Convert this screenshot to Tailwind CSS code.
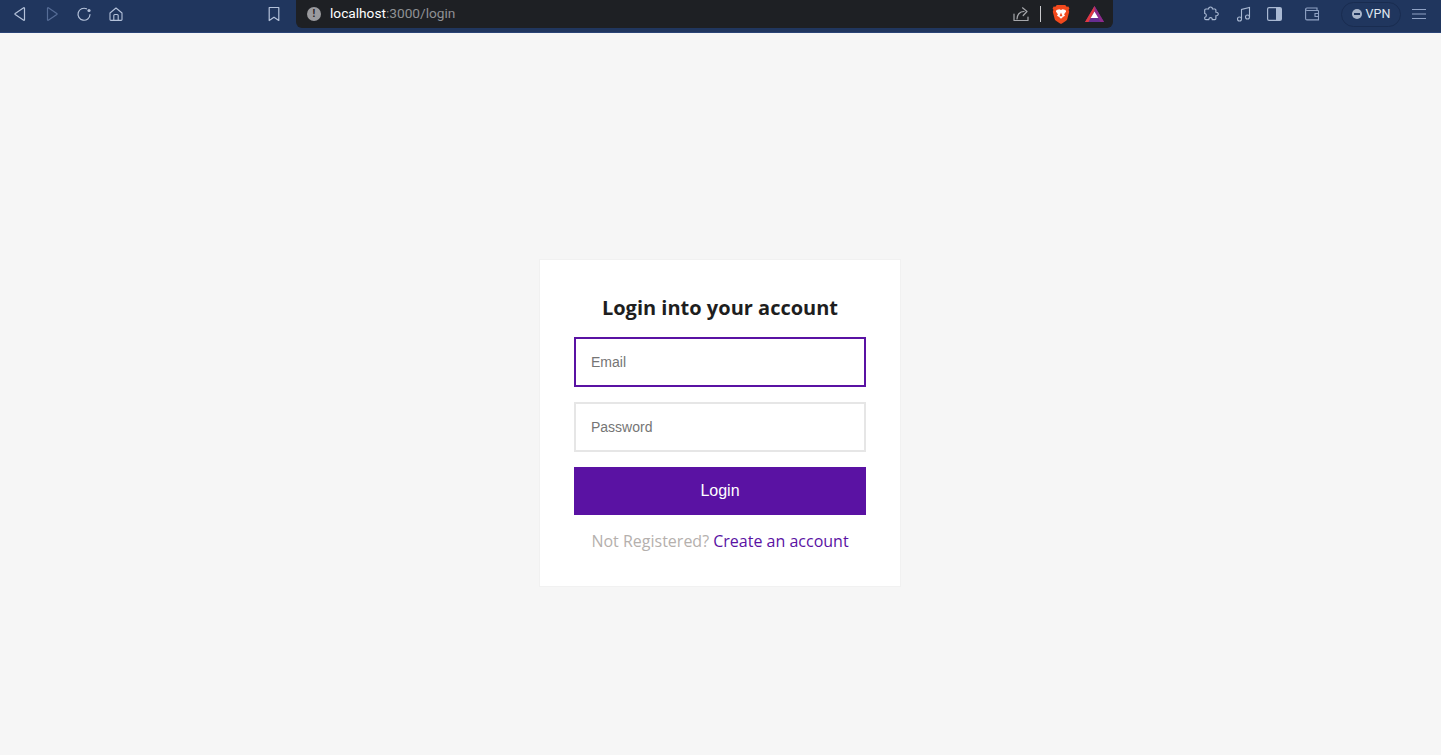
<!DOCTYPE html>
<html lang="en">
<head>
<meta charset="utf-8">
<title>Login</title>
<script src="https://cdn.jsdelivr.net/npm/@tailwindcss/browser@4"></script>
</head>
<body class="h-[755px] overflow-hidden bg-[#f6f6f6] font-['Open_Sans',sans-serif]">
<header class="flex h-[33px] items-start border-b border-[#2a4476] bg-[#20365e]">
  <div class="flex h-[28px] w-[296px] shrink-0 items-center pl-[12px]">
    <svg class="h-[16px] w-[16px] text-[#b4c2da]" viewBox="0 0 16 16" fill="none" stroke="currentColor" stroke-width="1.2" stroke-linejoin="round"><path d="M12.500 2.200v11.600c0 .5-.4.6-.8.4L3.200 8.600c-.4-.3-.4-.9 0-1.200l8.500-5.600c.4-.2.8-.1.8.4z"/></svg>
    <svg class="ml-[16px] h-[16px] w-[16px] text-[#566d97]" viewBox="0 0 16 16" fill="none" stroke="currentColor" stroke-width="1.2" stroke-linejoin="round"><path d="M3.500 2.200v11.600c0 .5.4.6.8.4l8.500-5.600c.4-.3.4-.9 0-1.200L4.300 1.800c-.4-.2-.8-.1-.8.4z"/></svg>
    <svg class="ml-[16px] h-[16px] w-[16px] text-[#b4c2da]" viewBox="0 0 16 16" fill="none" stroke="currentColor" stroke-width="1.2" stroke-linecap="round"><path d="M14 8.500A6 6 0 1 1 10.500 2.800"/><circle cx="13" cy="4.500" r="1.600" fill="currentColor" stroke="none"/></svg>
    <svg class="ml-[16px] h-[16px] w-[16px] text-[#b4c2da]" viewBox="0 0 16 16" fill="none" stroke="currentColor" stroke-width="1.1" stroke-linejoin="round"><path d="M2 7l6-5 6 5v6.500c0 .5-.4.9-.9.9H2.900c-.5 0-.9-.4-.9-.9z"/><path d="M5.800 14.300V9.500c0-.6.4-1 1-1h2.400c.6 0 1 .4 1 1v4.800"/></svg>
    <svg class="ml-[142px] h-[16px] w-[16px] text-[#b4c2da]" viewBox="0 0 16 16" fill="none" stroke="currentColor" stroke-width="1.2" stroke-linejoin="round"><path d="M3.200 1.500h9.600v13L8 11.200l-4.800 3.300z"/></svg>
  </div>
  <div class="flex h-[28px] w-[817px] shrink-0 items-center rounded-b-[6px] bg-[#1e2024] pl-[11px]">
    <span class="flex h-[14px] w-[14px] items-center justify-center rounded-full bg-[#9a9a9e] font-['Liberation_Sans',sans-serif] text-[10px] leading-none font-bold text-[#1e2024]">!</span>
    <span class="ml-[9px] font-['Roboto',sans-serif] text-[13.7px] leading-none text-white">localhost<span class="text-[#8f9094]">:3000/login</span></span>
    <svg class="ml-auto h-[18px] w-[18px] text-[#a6a7ab]" viewBox="0 0 18 18" fill="none" stroke="currentColor" stroke-width="1.2" stroke-linejoin="round" stroke-linecap="round"><path d="M2 9v6.500h14V12"/><path d="M5 14c0-4 2.500-7.500 7-7.500"/><path d="M10.500 2.800l4.500 3.700-3.800 4"/></svg>
    <span class="ml-[10px] h-[16px] w-px bg-[#c9c9cc]"></span>
    <svg class="ml-[11px] h-[20px] w-[18px]" viewBox="0 0 18 20"><path d="M4.800 1h8.400l1.500 1.700 1.700-.3 1 2.100-.8 1.200.6 2-1.900 7.300c-.3 1-.8 1.500-1.600 2L9.600 19.700c-.4.200-.8.200-1.200 0L4.300 17c-.8-.5-1.300-1-1.600-2L.8 7.700l.6-2-.8-1.200 1-2.100 1.700.3z" fill="#f2491d"/><path d="M4.500 6l2.800-.8L9 6l1.700-.8 2.800.8.600 1.500-2 2.800.9 1.400-1.800 1.100L9 14.800 6.800 12.800 5 11.700l.9-1.400-2-2.800z" fill="#fff"/><path d="M9 8.500l-1.500 3.700h3z" fill="#f2491d"/></svg>
    <svg class="ml-[15px] mr-[9px] h-[16px] w-[19px]" viewBox="0 0 19 16"><path d="M9.500 0L19 16H0z" fill="#662d91"/><path d="M9.500 0L19 16h-3.500L9.500 5z" fill="#8e2a8b"/><path d="M9.500 0L0 16h3.500L9.500 5z" fill="#e2383f"/><path d="M9.500 5.500l3.800 6.500H5.700z" fill="#fff"/></svg>
  </div>
  <div class="flex h-[28px] flex-1 items-center pl-[90px]">
    <svg class="h-[16px] w-[16px] text-[#a9b9d3]" viewBox="0 0 17 17" fill="none" stroke="currentColor" stroke-width="1.2" stroke-linejoin="round"><path d="M6 3.200C5.800 1.800 7 1 8 1s2.200.8 2 2.200h2.600c.7 0 1.100.4 1.100 1.100v2.400c1.400-.3 2.500.6 2.500 1.800s-1.100 2.100-2.500 1.800v3c0 .7-.4 1.200-1.100 1.200H9.800c.2-1.400-.6-2.200-1.700-2.200s-2 .8-1.800 2.200H3c-.7 0-1.200-.5-1.200-1.200V12C2.800 12 3.500 11 3.500 10S2.800 8 1.800 8V4.300c0-.7.500-1.100 1.200-1.100z"/></svg>
    <svg class="ml-[17px] h-[16px] w-[16px] text-[#a9b9d3]" viewBox="0 0 16 16" fill="none" stroke="currentColor" stroke-width="1.100"><path d="M5.500 13V3.500l8-2V11"/><circle cx="3.500" cy="13" r="2"/><circle cx="11.500" cy="11" r="2"/></svg>
    <svg class="ml-[15px] h-[14px] w-[15px]" viewBox="0 0 15 14"><rect x=".6" y=".6" width="13.800" height="12.800" rx="1.500" fill="none" stroke="#a9b9d3" stroke-width="1.200"/><rect x="9" y="1" width="5" height="12" fill="#a9b9d3"/></svg>
    <svg class="ml-[23px] h-[14px] w-[15px] text-[#8fa2c4]" viewBox="0 0 15 14" fill="none" stroke="currentColor" stroke-width="1.100"><path d="M13.500 3.500H2C1.200 3.500.6 3 .6 2.300S1.200 1 2 1h10v2.500"/><path d="M.6 2.300v9.200c0 .8.600 1.400 1.400 1.400h11.500V3.500"/><path d="M14 6.500h-4v3h4"/></svg>
    <div class="ml-[21px] flex h-[25px] w-[60px] items-center justify-center gap-[4px] rounded-full border border-[#192c50] font-['Roboto',sans-serif] text-[12.5px] text-[#dfe5ef]">
      <span class="flex h-[10px] w-[10px] items-center justify-center rounded-full bg-[#a9b5c9]"><span class="h-[2px] w-[6px] bg-[#20365e]"></span></span>VPN
    </div>
    <svg class="ml-[11px] h-[12px] w-[14px] text-[#8fa2c4]" viewBox="0 0 14 12" stroke="currentColor" stroke-width="1.200"><path d="M0 1.500h14M0 6h14M0 10.500h14"/></svg>
  </div>
</header>
<main class="pt-[226px] pl-[539px]">
  <section class="h-[328px] w-[362px] border border-[#f1f1f1] bg-white px-[34px] pt-[34px]">
    <h1 class="h-[43px] text-center text-[20px] leading-[28px] font-bold text-[#1e1e1e]">Login into your account</h1>
    <form class="flex flex-col font-['Liberation_Sans',sans-serif]">
      <input type="email" placeholder="Email" class="h-[50px] w-full border-2 border-[#5a12a3] bg-white px-[15px] text-[14px] outline-none placeholder:text-[#757575]">
      <input type="password" placeholder="Password" class="mt-[15px] h-[50px] w-full border-2 border-[#e6e6e6] bg-white px-[15px] text-[14px] outline-none placeholder:text-[#757575]">
      <button type="button" class="mt-[15px] h-[48px] w-full bg-[#5a12a3] text-[16px] text-white">Login</button>
    </form>
    <p class="mt-[15px] text-center text-[16px] leading-[22px] text-[#b5b0ad]">Not Registered? <a href="#" class="text-[#5a12a3]">Create an account</a></p>
  </section>
</main>
</body>
</html>
